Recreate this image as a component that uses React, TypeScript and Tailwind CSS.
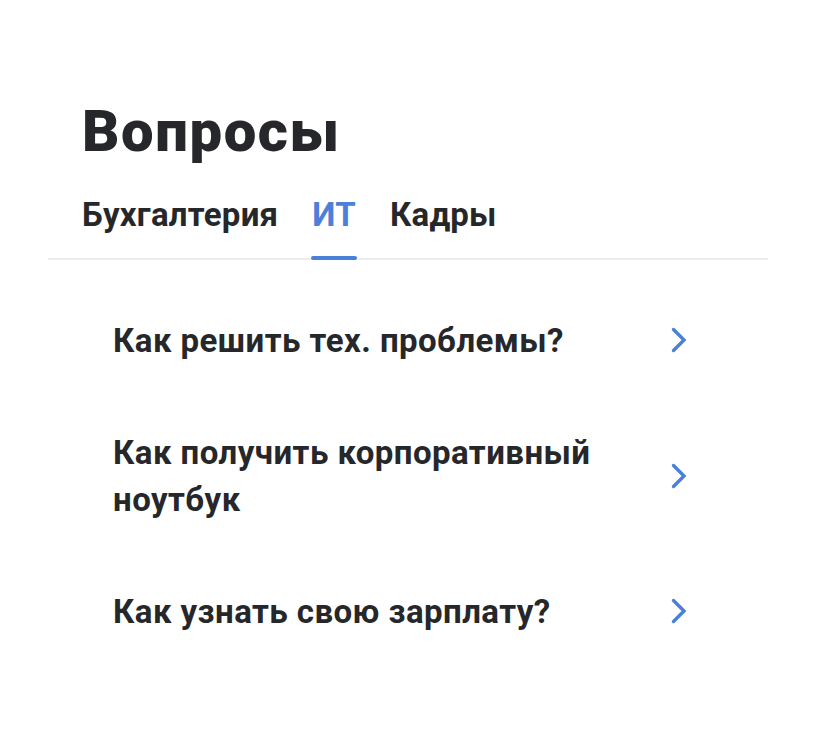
import React, { useState } from 'react';

const tabs = ['Бухгалтерия', 'ИТ', 'Кадры'];

const questions = [
  'Как решить тех. проблемы?',
  'Как получить корпоративный ноутбук',
  'Как узнать свою зарплату?',
];

function Chevron() {
  return (
    <svg width="18" height="28" viewBox="0 0 18 28" fill="none" className="shrink-0">
      <polyline
        points="3.5,3.5 14,14 3.5,24.5"
        stroke="#4a80d9"
        strokeWidth="3.4"
        strokeLinecap="round"
        strokeLinejoin="miter"
      />
    </svg>
  );
}

export default function App() {
  const [active, setActive] = useState('ИТ');

  return (
    <div className="min-h-[732px] bg-white px-12 pt-[102px] font-['Roboto',sans-serif] text-[#26272b]">
      <h1 className="pl-[34px] text-[58px] font-black leading-[58px] tracking-[1.6px]">Вопросы</h1>

      <div className="mt-[35px] flex gap-[34px] border-b-2 border-[#ededed] pl-[34px]">
        {tabs.map((tab) => (
          <button
            key={tab}
            onClick={() => setActive(tab)}
            className={`relative pb-[23px] text-[33px] font-bold leading-[40px] tracking-[0.25px] ${
              active === tab ? 'text-[#4a80d9]' : 'text-[#26272b]'
            }`}
          >
            {tab}
            {active === tab && (
              <span className="absolute -bottom-[2px] -left-px -right-px h-[4px] rounded-full bg-[#4a80d9]" />
            )}
          </button>
        ))}
      </div>

      <div className="mt-[24px] pl-[65px] pr-[80px]">
        {questions.map((q) => (
          <div key={q} className="flex cursor-pointer items-center justify-between py-[32.5px]">
            <span className="max-w-[530px] text-[33px] font-bold leading-[47px] tracking-[0.45px]">{q}</span>
            <Chevron />
          </div>
        ))}
      </div>
    </div>
  );
}
